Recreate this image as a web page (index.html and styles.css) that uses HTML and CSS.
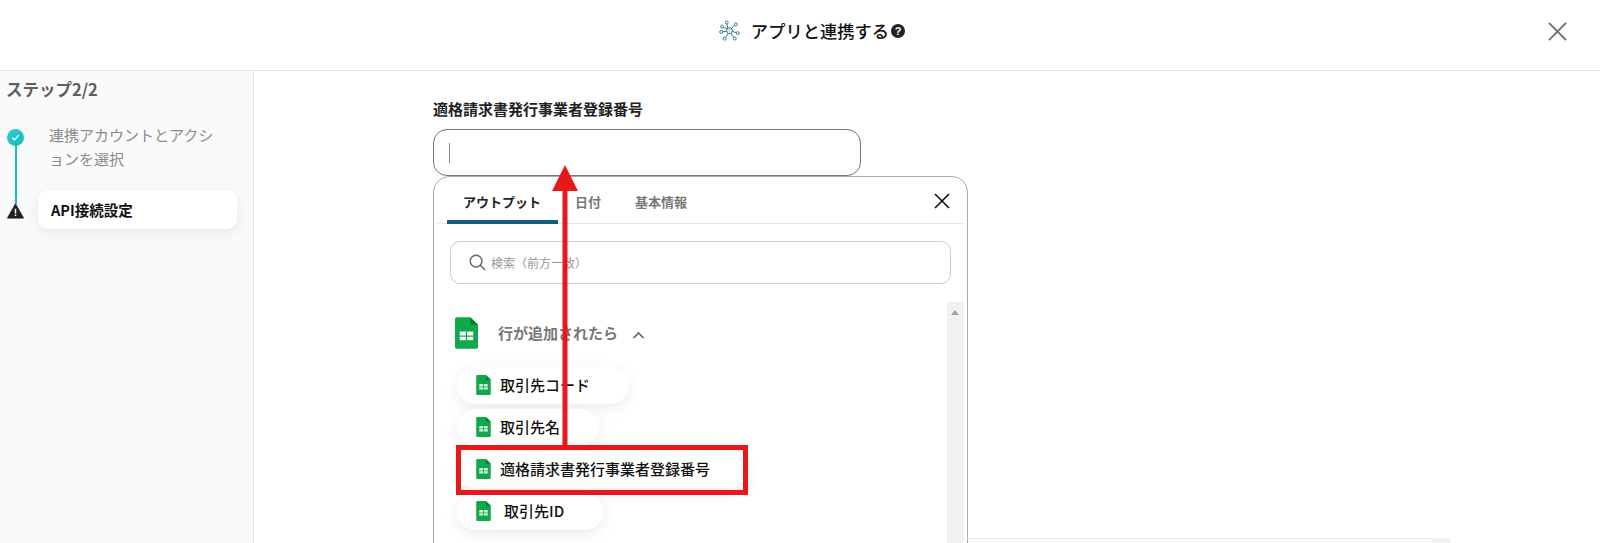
FILE: index.html
```html
<!DOCTYPE html>
<html lang="ja">
<head>
<meta charset="utf-8">
<title>アプリと連携する</title>
<link rel="stylesheet" href="styles.css">
</head>
<body>
<header class="header">
  <div class="title">
    <svg class="title-icon" viewBox="0 0 24 24" fill="none" stroke="#1c6d8c" stroke-width="1">
      <path d="M10 9.500 9 4M14 10l4-4M15 13l5 1.500M13.500 15.500l3.500 4.500M10.500 15.500l-3 4.500M9 13l-5.500 0.500M9.500 10.500 4.500 8"/>
      <path d="M10 9h4l1.500 3-1.500 3.500h-4L8.500 12z" fill="#d8edf3"/>
      <circle cx="8.800" cy="2.800" r="1.700" fill="#fff"/><circle cx="19.200" cy="5" r="1.700" fill="#fff"/><circle cx="21.300" cy="15" r="1.700" fill="#fff"/><circle cx="18" cy="21.200" r="1.700" fill="#fff"/><circle cx="6.500" cy="21.300" r="1.700" fill="#fff"/><circle cx="2.500" cy="13.600" r="1.700" fill="#fff"/><circle cx="3.500" cy="7.500" r="1.700" fill="#fff"/>
    </svg>
    <span class="title-text">アプリと連携する</span>
    <span class="help">?</span>
  </div>
  <svg class="close-main" viewBox="0 0 20 20" fill="none" stroke="#6f6f6f" stroke-width="2"><path d="M1 1l18 18M19 1 1 19"/></svg>
</header>
<div class="main">
  <aside class="sidebar">
    <h2 class="step-title">ステップ2/2</h2>
    <div class="steps">
      <div class="step step-done">
        <span class="check">
          <svg viewBox="0 0 18 18" fill="none" stroke="#fff" stroke-width="1.500"><path d="M5.500 9.300 8 11.500l4.500-5"/></svg>
        </span>
        <span class="connector"></span>
        <p class="step-label">連携アカウントとアクションを選択</p>
      </div>
      <div class="step step-current">
        <svg class="warn" viewBox="0 0 18 16"><path d="M9 .5 17.500 15.500H.5z" fill="#222" stroke="#222" stroke-linejoin="round"/><path d="M8.200 5.500h1.600v5.200H8.200zM8.200 11.800h1.600v1.600H8.200z" fill="#fff"/></svg>
        <div class="step-card">API接続設定</div>
      </div>
    </div>
  </aside>
  <main class="content">
    <label class="field-label">適格請求書発行事業者登録番号</label>
    <div class="input"><span class="caret"></span></div>
    <section class="panel">
      <div class="tabs">
        <span class="tab tab-active">アウトプット</span>
        <span class="tab">日付</span>
        <span class="tab tab-info">基本情報</span>
        <svg class="close-panel" viewBox="0 0 16 16" fill="none" stroke="#111" stroke-width="1.600"><path d="M1 1l14 14M15 1 1 15"/></svg>
      </div>
      <div class="search">
        <svg class="search-icon" viewBox="0 0 18 18" fill="none" stroke="#666" stroke-width="1.500"><circle cx="7.500" cy="7.500" r="6.200"/><path d="M12 12l5 5"/></svg>
        <span class="placeholder">検索（前方一致）</span>
      </div>
      <div class="list-wrap">
        <div class="list">
          <div class="group-head">
            <svg class="sheet-lg" viewBox="0 0 24 33"><path d="M2 0h14l8 8v23a2 2 0 0 1-2 2H2a2 2 0 0 1-2-2V2a2 2 0 0 1 2-2z" fill="#0fa84a"/><path d="M16 0l8 8h-8z" fill="#0a7f38"/><path d="M5 15h14v9H5z" fill="#fff"/><path d="M5 19h14v1.300H5zM11.300 15h1.400v9h-1.400z" fill="#0fa84a"/></svg>
            <span class="group-name">行が追加されたら</span>
            <svg class="chevron" viewBox="0 0 12 8" fill="none" stroke="#666" stroke-width="1.700"><path d="M1 7l5-5 5 5"/></svg>
          </div>
          <div class="chips">
            <div class="chip">
              <svg class="sheet" viewBox="0 0 24 33"><path d="M2 0h14l8 8v23a2 2 0 0 1-2 2H2a2 2 0 0 1-2-2V2a2 2 0 0 1 2-2z" fill="#0fa84a"/><path d="M16 0l8 8h-8z" fill="#0a7f38"/><path d="M5 15h14v9H5z" fill="#d9f2e2"/><path d="M5 19h14v1.300H5zM11.300 15h1.400v9h-1.400z" fill="#0fa84a"/></svg>
              <span>取引先コード</span>
            </div>
            <div class="chip">
              <svg class="sheet" viewBox="0 0 24 33"><path d="M2 0h14l8 8v23a2 2 0 0 1-2 2H2a2 2 0 0 1-2-2V2a2 2 0 0 1 2-2z" fill="#0fa84a"/><path d="M16 0l8 8h-8z" fill="#0a7f38"/><path d="M5 15h14v9H5z" fill="#d9f2e2"/><path d="M5 19h14v1.300H5zM11.300 15h1.400v9h-1.400z" fill="#0fa84a"/></svg>
              <span>取引先名</span>
            </div>
            <div class="chip">
              <svg class="sheet" viewBox="0 0 24 33"><path d="M2 0h14l8 8v23a2 2 0 0 1-2 2H2a2 2 0 0 1-2-2V2a2 2 0 0 1 2-2z" fill="#0fa84a"/><path d="M16 0l8 8h-8z" fill="#0a7f38"/><path d="M5 15h14v9H5z" fill="#d9f2e2"/><path d="M5 19h14v1.300H5zM11.300 15h1.400v9h-1.400z" fill="#0fa84a"/></svg>
              <span>適格請求書発行事業者登録番号</span>
            </div>
            <div class="chip chip-id">
              <svg class="sheet" viewBox="0 0 24 33"><path d="M2 0h14l8 8v23a2 2 0 0 1-2 2H2a2 2 0 0 1-2-2V2a2 2 0 0 1 2-2z" fill="#0fa84a"/><path d="M16 0l8 8h-8z" fill="#0a7f38"/><path d="M5 15h14v9H5z" fill="#d9f2e2"/><path d="M5 19h14v1.300H5zM11.300 15h1.400v9h-1.400z" fill="#0fa84a"/></svg>
              <span>取引先ID</span>
            </div>
          </div>
        </div>
        <div class="scrollbar"><span class="scroll-up"></span></div>
      </div>
    </section>
    <div class="under-line"></div>
    <div class="under-corner"></div>
  </main>
</div>
<div class="highlight"></div>
<svg class="arrow" viewBox="0 0 26 281"><path d="M13 0 26 26H15.500V281h-5V26H0z" fill="#e71818"/></svg>
</body>
</html>
```
FILE: styles.css
```css
* { box-sizing: border-box; }
html, body { margin: 0; height: 543px; overflow: hidden; background: #fff; }
body { font-family: "Noto Sans CJK JP", "Noto Sans", sans-serif; color: #111; position: relative; }
.header { height: 71px; border-bottom: 1px solid #e4e4e4; display: flex; align-items: center; justify-content: center; position: relative; }
.title { display: flex; align-items: center; margin-top: -9px; margin-left: 24px; }
.title-icon { width: 21px; height: 23px; margin-right: 11px; }
.title-text { font-size: 17.300px; font-weight: 500; line-height: 24px; }
.help { width: 14px; height: 14px; border-radius: 50%; background: #222; color: #fff; font-size: 11px; font-weight: 700; line-height: 14px; text-align: center; margin-left: 2px; font-family: "Liberation Sans", sans-serif; }
.close-main { position: absolute; right: 33px; top: 22px; width: 19px; height: 19px; }
.main { display: flex; height: 472px; }
.sidebar { width: 254px; flex: none; background: #fafafa; border-right: 1px solid #e4e4e4; padding: 6px 0 0 6px; }
.step-title { margin: 0; font-size: 16.500px; font-weight: 700; color: #5f5f5f; line-height: 24px; }
.steps { margin-top: 19px; margin-left: 1px; }
.step { position: relative; padding-left: 31px; }
.step-done { height: 70px; padding-left: 42px; padding-top: 3px; }
.check { position: absolute; left: 0; top: 9px; width: 17px; height: 17px; border-radius: 50%; background: linear-gradient(135deg, #2bc9d6, #14c0b4); display: flex; }
.check svg { width: 17px; height: 17px; }
.connector { position: absolute; left: 8px; top: 24px; width: 1.500px; height: 60px; background: #15bdc0; }
.step-label { margin: 0; width: 172px; font-size: 15px; line-height: 23.500px; font-weight: 400; color: #8a8a8a; word-break: break-all; }
.warn { position: absolute; left: 0; top: 13px; width: 17px; height: 16px; }
.step-card { width: 199px; height: 39px; background: #fff; border-radius: 10px; box-shadow: 0 4px 14px rgba(0,0,0,.08); padding-left: 13px; font-size: 14.500px; font-weight: 700; line-height: 39px; color: #111; }
.content { flex: 1; padding: 26px 0 0 179px; position: relative; }
.field-label { display: block; font-size: 15px; font-weight: 700; line-height: 24px; color: #222; }
.input { width: 428px; height: 47px; margin-top: 8px; border: 1px solid #777; border-radius: 14px; padding: 13px 0 0 15px; background: #fff; }
.caret { display: block; width: 1px; height: 20px; background: #888; }
.panel { width: 535px; height: 400px; margin-top: 0; border: 1px solid #aaa; border-radius: 16px; padding: 0 3px; background: #fff; }
.tabs { display: flex; align-items: center; height: 47px; border-bottom: 1px solid #e4e4e4; padding-left: 10px; position: relative; font-size: 13px; font-weight: 700; color: #777; }
.tab { height: 47px; line-height: 50px; padding: 0 16px; margin-right: 0; }
.tab-active { width: 111px; color: #222; border-bottom: 4px solid #0f5f7e; border-radius: 3px 3px 0 0; margin-right: 1px; }
.tab-info { margin-left: 2px; }
.close-panel { position: absolute; right: 14px; top: 16px; width: 16px; height: 16px; }
.search { margin: 17px 12px 0 13px; height: 43px; width: 501px; border: 1px solid #ccc; border-radius: 10px; display: flex; align-items: center; padding-left: 18px; }
.search-icon { width: 17px; height: 17px; margin-right: 5px; }
.placeholder { font-size: 12px; color: #999; }
.list-wrap { display: flex; margin-top: 18px; }
.list { flex: 1; padding: 14px 0 0 18px; }
.group-head { display: flex; align-items: center; height: 33px; }
.sheet-lg { width: 23px; height: 32px; flex: none; }
.group-name { margin-left: 20px; font-size: 15px; font-weight: 700; color: #777; }
.chevron { width: 13px; height: 8px; margin-left: 14px; margin-top: 4px; }
.chips { display: flex; flex-direction: column; align-items: flex-start; gap: 5px; margin: 18px 0 0 2px; }
.chip { display: flex; align-items: center; height: 37px; padding: 0 39px 0 19px; border-radius: 19px; background: #fff; box-shadow: 0 4px 16px rgba(0,0,0,.08); font-size: 15px; font-weight: 500; color: #111; white-space: nowrap; }
.chip span { margin-left: 9px; margin-top: -3px; }
.chip-id span { margin-left: 13px; }
.sheet { width: 15px; height: 20px; flex: none; margin-top: -2px; }
.scrollbar { width: 17px; height: 300px; background: #f1f1f1; position: relative; flex: none; margin-right: 0; }
.scroll-up { position: absolute; left: 4px; top: 8px; width: 0; height: 0; border-left: 4px solid transparent; border-right: 4px solid transparent; border-bottom: 5px solid #a3a3a3; }
.under-line { position: absolute; left: 713px; top: 467px; width: 473px; height: 1px; background: #e8e8e8; }
.under-corner { position: absolute; left: 1178px; top: 467px; width: 18px; height: 5px; background: #f1f1f1; }
.highlight { position: absolute; left: 456px; top: 445px; width: 292px; height: 50px; border: 5px solid #e71818; }
.arrow { position: absolute; left: 552px; top: 165px; width: 26px; height: 281px; }
```
